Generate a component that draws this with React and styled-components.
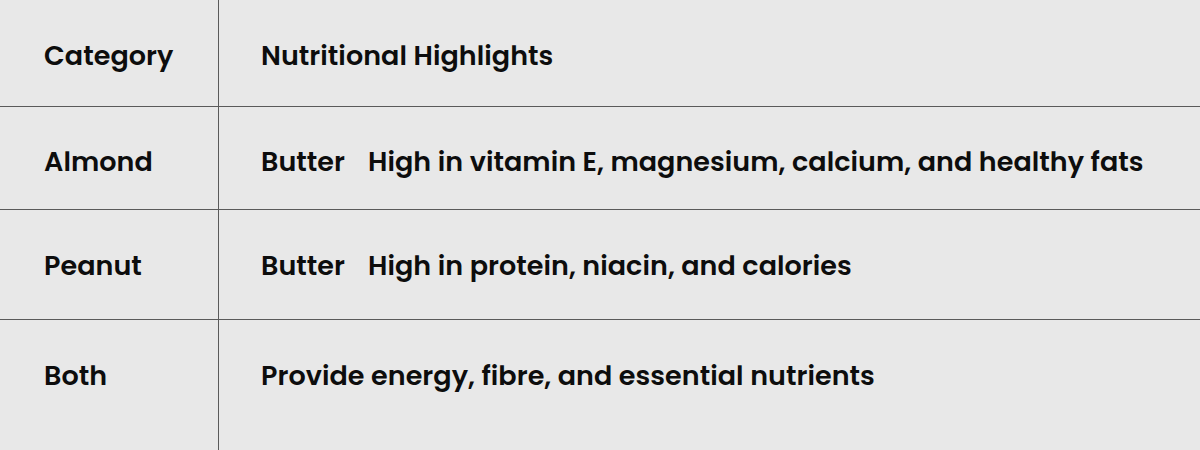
import styled, { createGlobalStyle } from 'styled-components';

const Global = createGlobalStyle`
  html, body {
    margin: 0;
    padding: 0;
    background: #e8e8e8;
  }
  body {
    font-family: Poppins, Inter, "Noto Sans", sans-serif;
  }
`;

const Table = styled.div`
  width: 1200px;
  height: 450px;
  overflow: hidden;
  background: #e8e8e8;
  color: #0d0d0d;
`;

const Row = styled.div`
  display: grid;
  grid-template-columns: 219px 1fr;
  height: ${(p) => p.h}px;
  border-bottom: ${(p) => (p.last ? 'none' : '1px solid #5a5a5a')};
`;

const Cell = styled.div`
  padding: ${(p) => p.top}px 0 0 ${(p) => (p.first ? 44 : 42)}px;
  font-size: 27px;
  line-height: 40px;
  font-weight: 600;
  letter-spacing: 0.05px;
  white-space: nowrap;
  border-right: ${(p) => (p.first ? '1px solid #5a5a5a' : 'none')};
`;

const Lead = styled.span`
  margin-right: 23px;
`;

const rows = [
  { cat: 'Category', text: 'Nutritional Highlights', h: 106, top: 36 },
  { cat: 'Almond', lead: 'Butter', text: 'High in vitamin E, magnesium, calcium, and healthy fats', h: 102, top: 35 },
  { cat: 'Peanut', lead: 'Butter', text: 'High in protein, niacin, and calories', h: 109, top: 36 },
  { cat: 'Both', text: 'Provide energy, fibre, and essential nutrients', h: 140, top: 36, last: true },
];

export default function App() {
  return (
    <>
      <Global />
      <Table>
        {rows.map((r) => (
          <Row key={r.cat} h={r.h} last={r.last}>
            <Cell first top={r.top}>{r.cat}</Cell>
            <Cell top={r.top}>
              {r.lead && <Lead>{r.lead}</Lead>}
              {r.text}
            </Cell>
          </Row>
        ))}
      </Table>
    </>
  );
}
